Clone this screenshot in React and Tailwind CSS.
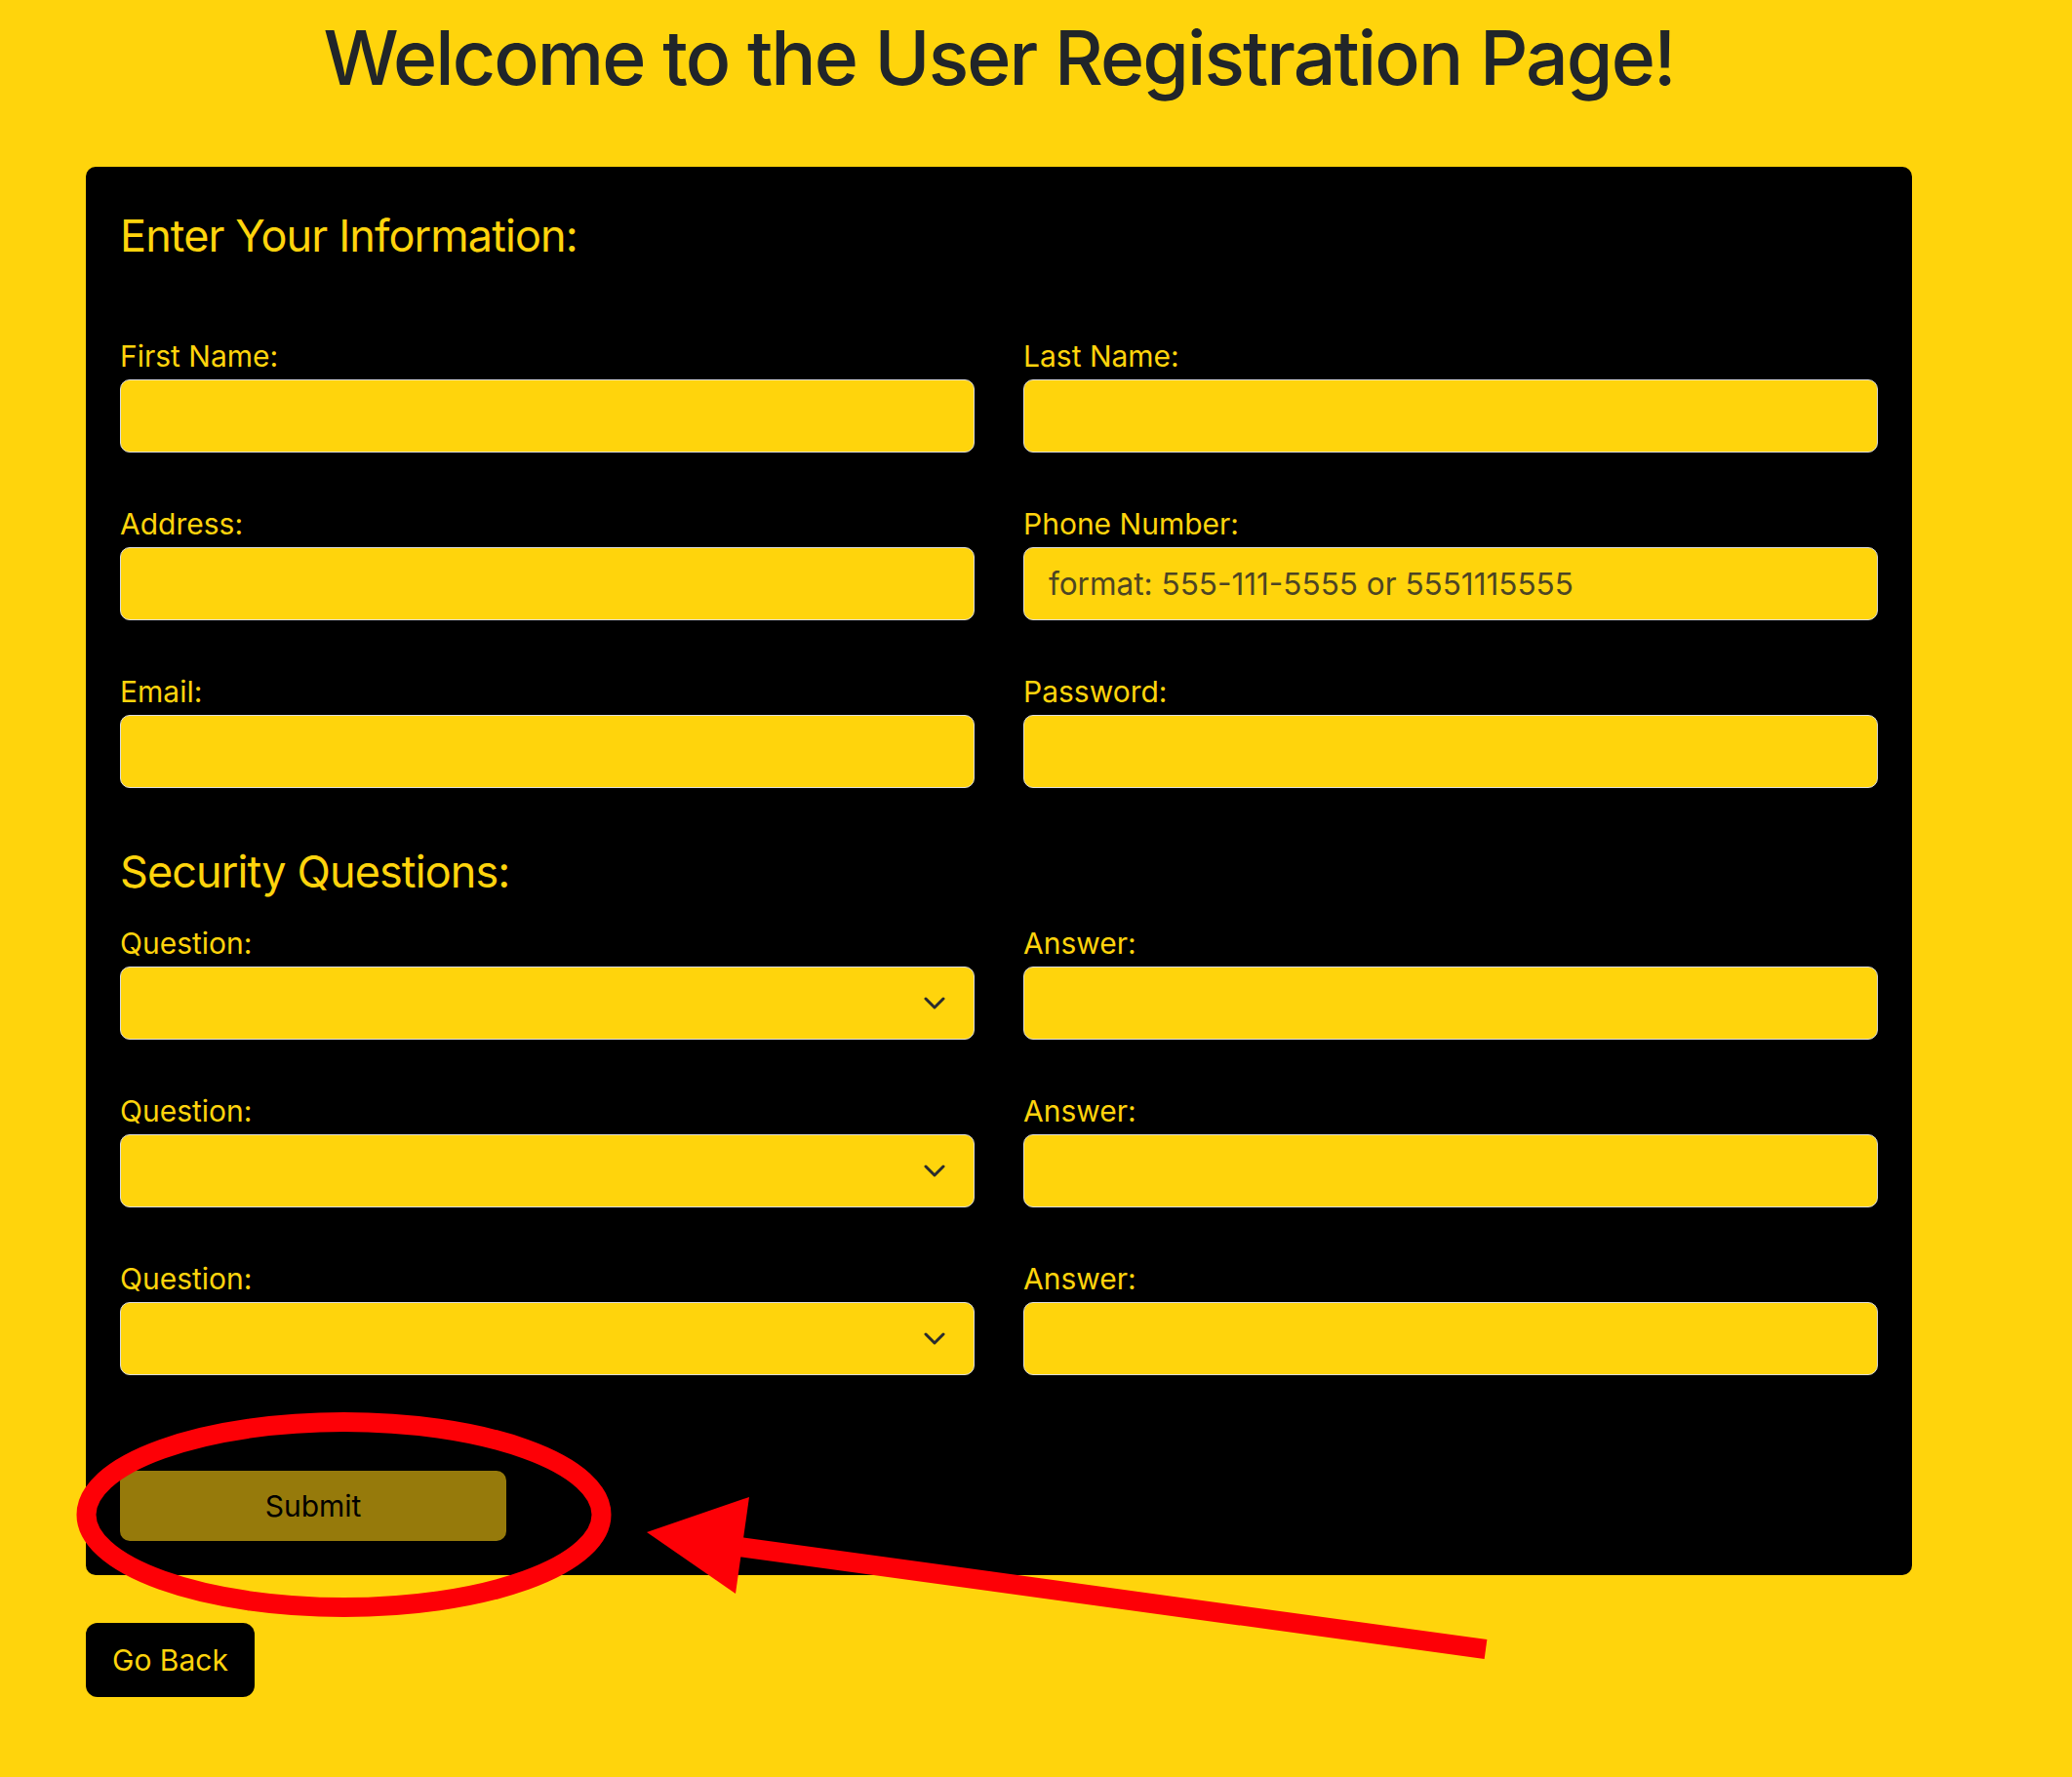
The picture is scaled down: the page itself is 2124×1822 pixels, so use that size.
import React from 'react'

const fieldRows = [
  { label: 'First Name:' },
  { label: 'Last Name:' },
  { label: 'Address:' },
  { label: 'Phone Number:', placeholder: 'format: 555-111-5555 or 5551115555' },
  { label: 'Email:' },
  { label: 'Password:', type: 'password' },
]

const inputCls =
  'block h-[75px] w-full rounded-[10px] border-[1.5px] border-[#dcdcdc] bg-[#ffd40c] px-[25px] text-[31.5px] text-[#212529] outline-none placeholder:text-[#4d4524]'

function Label({ children }) {
  return <label className="mb-px block text-[30px] leading-[1.5] text-[#ffd40c]">{children}</label>
}

function Field({ label, placeholder, type = 'text' }) {
  return (
    <div>
      <Label>{label}</Label>
      <input type={type} placeholder={placeholder} className={inputCls} />
    </div>
  )
}

function QuestionSelect() {
  return (
    <div>
      <Label>Question:</Label>
      <div className="relative">
        <select className={inputCls + ' appearance-none'} defaultValue="">
          <option value=""></option>
        </select>
        {/* chevron */}
        <svg
          className="pointer-events-none absolute right-[30px] top-[31px]"
          width="22"
          height="13"
          viewBox="0 0 22 13"
          fill="none"
        >
          <path d="M2 2l9 9 9-9" stroke="#2a2b2e" strokeWidth="3" strokeLinecap="round" strokeLinejoin="round" />
        </svg>
      </div>
    </div>
  )
}

// Red circle + arrow drawn over the submit button
function Annotation() {
  return (
    <svg className="pointer-events-none absolute left-0 top-0" width="2124" height="1822" viewBox="0 0 2124 1822">
      <ellipse cx="352.5" cy="1553" rx="264" ry="95" fill="none" stroke="#fd0006" strokeWidth="20" />
      <line x1="758" y1="1586" x2="1523" y2="1691" stroke="#fd0006" strokeWidth="20" />
      <polygon points="663,1571 768,1535 754,1634" fill="#fd0006" />
    </svg>
  )
}

export default function App() {
  return (
    <div className="relative min-h-screen bg-[#ffd40c] font-['Inter','Liberation_Sans',sans-serif]">
      <div className="w-[1960px] pl-[88px] pt-[13px] pb-[80px]">
        <h1 className="text-center text-[77px] font-medium leading-[1.2] tracking-[-0.025em] text-[#212529]">
          Welcome to the User Registration Page!
        </h1>

        <div className="mt-[66px] rounded-[10px] bg-black px-[35px] pt-[44px] pb-[35px]">
          <h2 className="text-[45px] leading-[1.2] tracking-[-0.02em] text-[#ffd40c]">Enter Your Information:</h2>

          <div className="mt-[74px] grid grid-cols-2 gap-x-[50px] gap-y-[51px]">
            {fieldRows.map((f) => (
              <Field key={f.label} {...f} />
            ))}
          </div>

          <h2 className="mt-[59px] text-[45px] leading-[1.2] tracking-[-0.02em] text-[#ffd40c]">Security Questions:</h2>

          <div className="mt-[24px] grid grid-cols-2 gap-x-[50px] gap-y-[51px]">
            {[0, 1, 2].map((i) => (
              <React.Fragment key={i}>
                <QuestionSelect />
                <Field label="Answer:" />
              </React.Fragment>
            ))}
          </div>

          <button className="mt-[98px] h-[72px] w-[396px] rounded-[10px] bg-[#967a0b] text-[30px] text-black">
            Submit
          </button>
        </div>

        <button className="mt-[49px] h-[76px] w-[173px] rounded-[12px] bg-black text-[30px] text-[#ffd40c]">
          Go Back
        </button>
      </div>

      <Annotation />
    </div>
  )
}
